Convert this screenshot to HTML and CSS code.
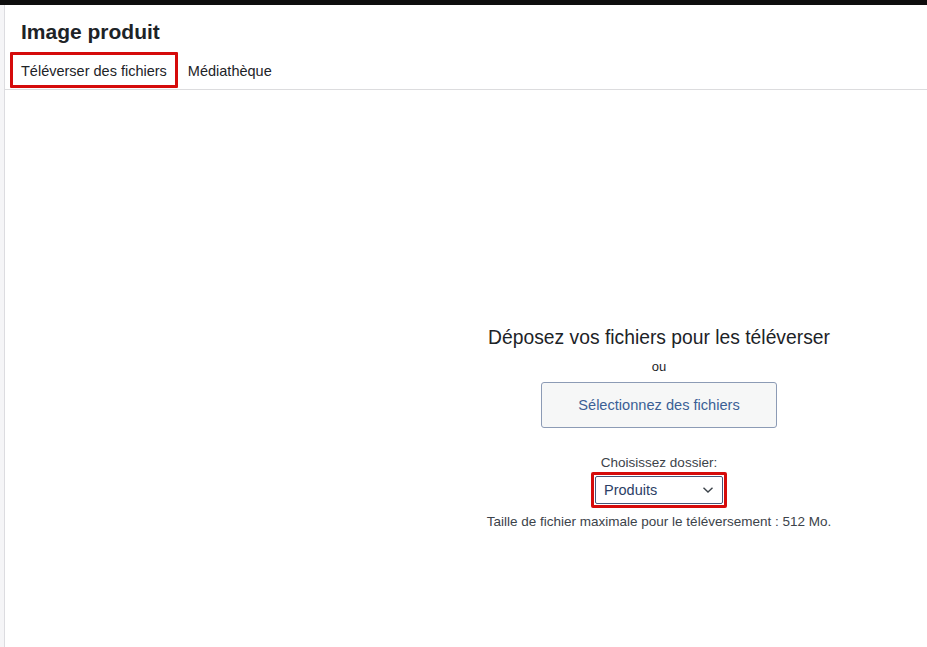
FILE: index.html
```html
<!DOCTYPE html>
<html lang="fr">
<head>
<meta charset="utf-8">
<title>Image produit</title>
<link rel="stylesheet" href="styles.css">
</head>
<body>
<div class="topbar"></div>
<div class="frame">
  <div class="rail"></div>
  <div class="modal">
    <h1 class="title">Image produit</h1>
    <div class="tabs">
      <a class="tab tab-active">Téléverser des fichiers</a>
      <a class="tab">Médiathèque</a>
    </div>
    <div class="content">
      <div class="spacer"></div>
      <div class="uploader">
        <h2 class="drop-title">Déposez vos fichiers pour les téléverser</h2>
        <p class="or">ou</p>
        <button class="select-btn">Sélectionnez des fichiers</button>
        <label class="folder-label">Choisissez dossier:</label>
        <div class="select-wrap">
          <div class="select">
            <span>Produits</span>
            <svg width="12" height="8" viewBox="0 0 12 8"><path d="M1.5 1.8 L6 6 L10.5 1.8" fill="none" stroke="#3c434a" stroke-width="1.4"/></svg>
          </div>
        </div>
        <p class="max-size">Taille de fichier maximale pour le téléversement : 512 Mo.</p>
      </div>
    </div>
  </div>
</div>
</body>
</html>
```

FILE: styles.css
```css
* { box-sizing: border-box; }
html, body { margin: 0; padding: 0; height: 100%; }
body {
  font-family: "Liberation Sans", Arial, sans-serif;
  color: #1d2327;
  background: #fff;
  display: flex;
  flex-direction: column;
}
.topbar { height: 5px; background: #0e0e0e; flex: none; }
.frame { flex: 1; display: flex; }
.rail {
  width: 5px;
  background: #f5f5f7;
  border-right: 1px solid #dcdce0;
  flex: none;
}
.modal { flex: 1; display: flex; flex-direction: column; }
.title {
  margin: 0;
  padding: 14px 0 0 16px;
  height: 47px;
  font-size: 21px;
  font-weight: bold;
  line-height: 26px;
  color: #1d2327;
}
.tabs {
  display: flex;
  align-items: stretch;
  height: 38px;
  border-bottom: 1px solid #dcdcde;
  padding-left: 5px;
}
.tab {
  font-size: 14.5px;
  color: #1d2327;
  padding: 0 8px;
  display: flex;
  align-items: center;
  padding-top: 2px;
  height: 36px;
}
.tab-active {
  border: 3px solid #d50b0b;
  border-radius: 1px;
  padding: 1px 8px 0;
  margin-right: 2px;
}
.content { flex: 1; display: flex; }
.spacer { width: 386px; flex: none; }
.uploader {
  flex: 1;
  display: flex;
  flex-direction: column;
  align-items: center;
  padding-top: 236px;
}
.drop-title {
  margin: 0;
  font-size: 19.3px;
  font-weight: normal;
  line-height: 24px;
  color: #1d2327;
}
.or {
  margin: 9px 0 0;
  font-size: 13px;
  line-height: 16px;
  color: #1d2327;
}
.select-btn {
  margin-top: 7px;
  width: 236px;
  height: 46px;
  background: #f6f7f7;
  border: 1px solid #8c9bb5;
  border-radius: 3px;
  font-family: inherit;
  font-size: 14.6px;
  color: #3b5f95;
}
.folder-label {
  margin-top: 28px;
  font-size: 13.5px;
  line-height: 14px;
  color: #3c434a;
}
.select-wrap {
  margin-top: 2px;
  border: 3px solid #d50b0b;
  border-radius: 2px;
  padding: 1px;
}
.select {
  width: 128px;
  height: 28px;
  border: 1px solid #46557a;
  border-radius: 2px;
  display: flex;
  align-items: center;
  justify-content: space-between;
  padding: 0 8px 0 8px;
  font-size: 14.5px;
  color: #2c3e66;
}
.max-size {
  margin: 6px 0 0;
  font-size: 13.5px;
  line-height: 16px;
  color: #3c434a;
}
```
